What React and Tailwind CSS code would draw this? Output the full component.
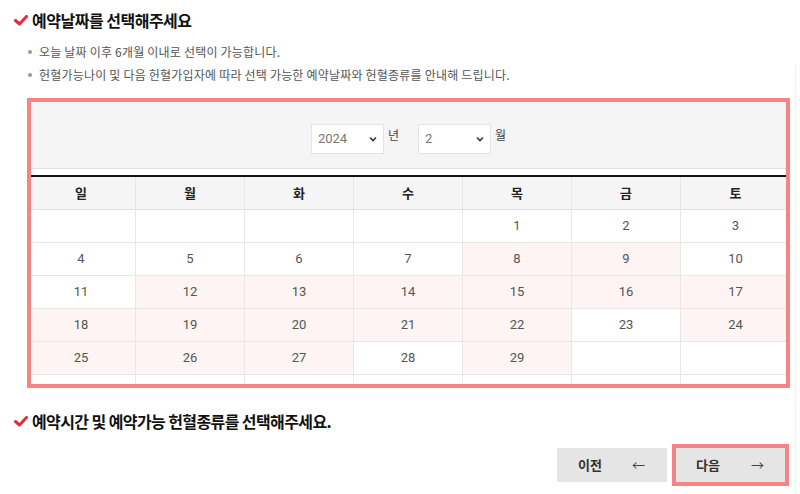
import React from "react";

const font = { fontFamily: '"Noto Sans CJK KR", "Noto Sans", sans-serif' };
const numFont = { fontFamily: 'Roboto, "Noto Sans CJK KR", sans-serif' };

function Check() {
  return (
    <svg width="14" height="11" viewBox="0 0 14 11" className="shrink-0">
      <path d="M1.5 5.5 L5.5 9 L12.5 1.5" fill="none" stroke="#e8283b" strokeWidth="3" strokeLinecap="round" strokeLinejoin="round" />
    </svg>
  );
}

function Chevron() {
  return (
    <svg width="8" height="6" viewBox="0 0 8 6">
      <path d="M1 1.5 L4 4.5 L7 1.5" fill="none" stroke="#333" strokeWidth="1.6" />
    </svg>
  );
}

const days = ["일", "월", "화", "수", "목", "금", "토"];
const pink = new Set([8, 9, 12, 13, 14, 15, 16, 17, 18, 19, 20, 21, 22, 24, 25, 26, 27, 29]);
const weeks = [
  [null, null, null, null, 1, 2, 3],
  [4, 5, 6, 7, 8, 9, 10],
  [11, 12, 13, 14, 15, 16, 17],
  [18, 19, 20, 21, 22, 23, 24],
  [25, 26, 27, 28, 29, null, null],
  [null, null, null, null, null, null, null],
];

export default function App() {
  return (
    <div className="w-[800px] h-[494px] bg-white relative overflow-hidden" style={font}>
      <div className="absolute left-[795px] top-[65px] w-px h-[429px] bg-[#f0f0f0]" />
      <div className="pl-[14px] pt-[8px] flex items-center gap-[4px]">
        <Check />
        <h2 className="text-[16px] font-bold text-[#111] tracking-[-0.5px]">예약날짜를 선택해주세요</h2>
      </div>
      <ul className="mt-[11px] pl-[28px] flex flex-col gap-[5px] text-[12px] text-[#555] tracking-[0.2px]">
        <li className="flex items-center gap-[7px] h-[18px]">
          <span className="w-[4px] h-[4px] rounded-full bg-[#999] inline-block" />
          오늘 날짜 이후 6개월 이내로 선택이 가능합니다.
        </li>
        <li className="flex items-center gap-[7px] h-[18px]">
          <span className="w-[4px] h-[4px] rounded-full bg-[#999] inline-block" />
          헌혈가능나이 및 다음 헌혈가입자에 따라 선택 가능한 예약날짜와 헌혈종류를 안내해 드립니다.
        </li>
      </ul>

      <div className="relative ml-[27px] mt-[14px] w-[763px] h-[290px] overflow-hidden">
        <div className="h-[71px] bg-[#f5f5f5] border-b border-[#e2e2e2] flex items-center justify-center gap-[4px] pt-[12px]">
          <div className="w-[73px] h-[30px] bg-white border border-[#e4e4e4] flex items-center justify-between px-[6px] text-[13px] text-[#777]" style={numFont}>
            <span>2024</span>
            <Chevron />
          </div>
          <span className="text-[12px] text-[#444] mr-[15px] -mt-[8px]">년</span>
          <div className="w-[73px] h-[30px] bg-white border border-[#e4e4e4] flex items-center justify-between px-[6px] text-[13px] text-[#777]" style={numFont}>
            <span>2</span>
            <Chevron />
          </div>
          <span className="text-[12px] text-[#444] -mt-[8px]">월</span>
        </div>
        <div className="h-[6px]" />
        <div className="border-t-2 border-[#111]">
          <div className="grid grid-cols-7 h-[33px] bg-[#f5f5f5] border-b border-[#e0e0e0]">
            {days.map((d, i) => (
              <div key={d} className={`flex items-center justify-center text-[13px] font-bold text-[#222] ${i < 6 ? "border-r border-[#e6e6e6]" : ""}`}>
                {d}
              </div>
            ))}
          </div>
          {weeks.map((w, wi) => (
            <div key={wi} className="grid grid-cols-7 h-[33px] border-b border-[#e6e6e6]">
              {w.map((n, i) => (
                <div
                  key={i}
                  className={`flex items-center justify-center text-[13px] text-[#555] ${i < 6 ? "border-r border-[#e8e8e8]" : ""} ${n && pink.has(n) ? "bg-[#fdf4f3]" : "bg-white"}`}
                  style={numFont}
                >
                  {n}
                </div>
              ))}
            </div>
          ))}
        </div>
        <div className="absolute inset-0 border-[4px] border-[#f58584] pointer-events-none" />
      </div>

      <div className="pl-[14px] mt-[21px] flex items-center gap-[4px]">
        <Check />
        <h2 className="text-[16px] font-bold text-[#111] tracking-[-0.6px]">예약시간 및 예약가능 헌혈종류를 선택해주세요.</h2>
      </div>

      <div className="flex justify-end items-center gap-[5px] pr-[11px] mt-[11px]">
        <button className="w-[110px] h-[34px] bg-[#e5e5e5] flex items-center justify-between pl-[21px] pr-[22px] text-[13px] font-bold text-[#333]">
          <span>이전</span>
          <span className="font-normal text-[13px] text-[#444]">←</span>
        </button>
        <div className="relative p-[4px] bg-[#f58584]">
          <button className="w-[109px] h-[34px] bg-[#e5e5e5] flex items-center justify-between pl-[20px] pr-[21px] text-[13px] font-bold text-[#333]">
            <span>다음</span>
            <span className="font-normal text-[13px] text-[#444]">→</span>
          </button>
        </div>
      </div>
    </div>
  );
}
